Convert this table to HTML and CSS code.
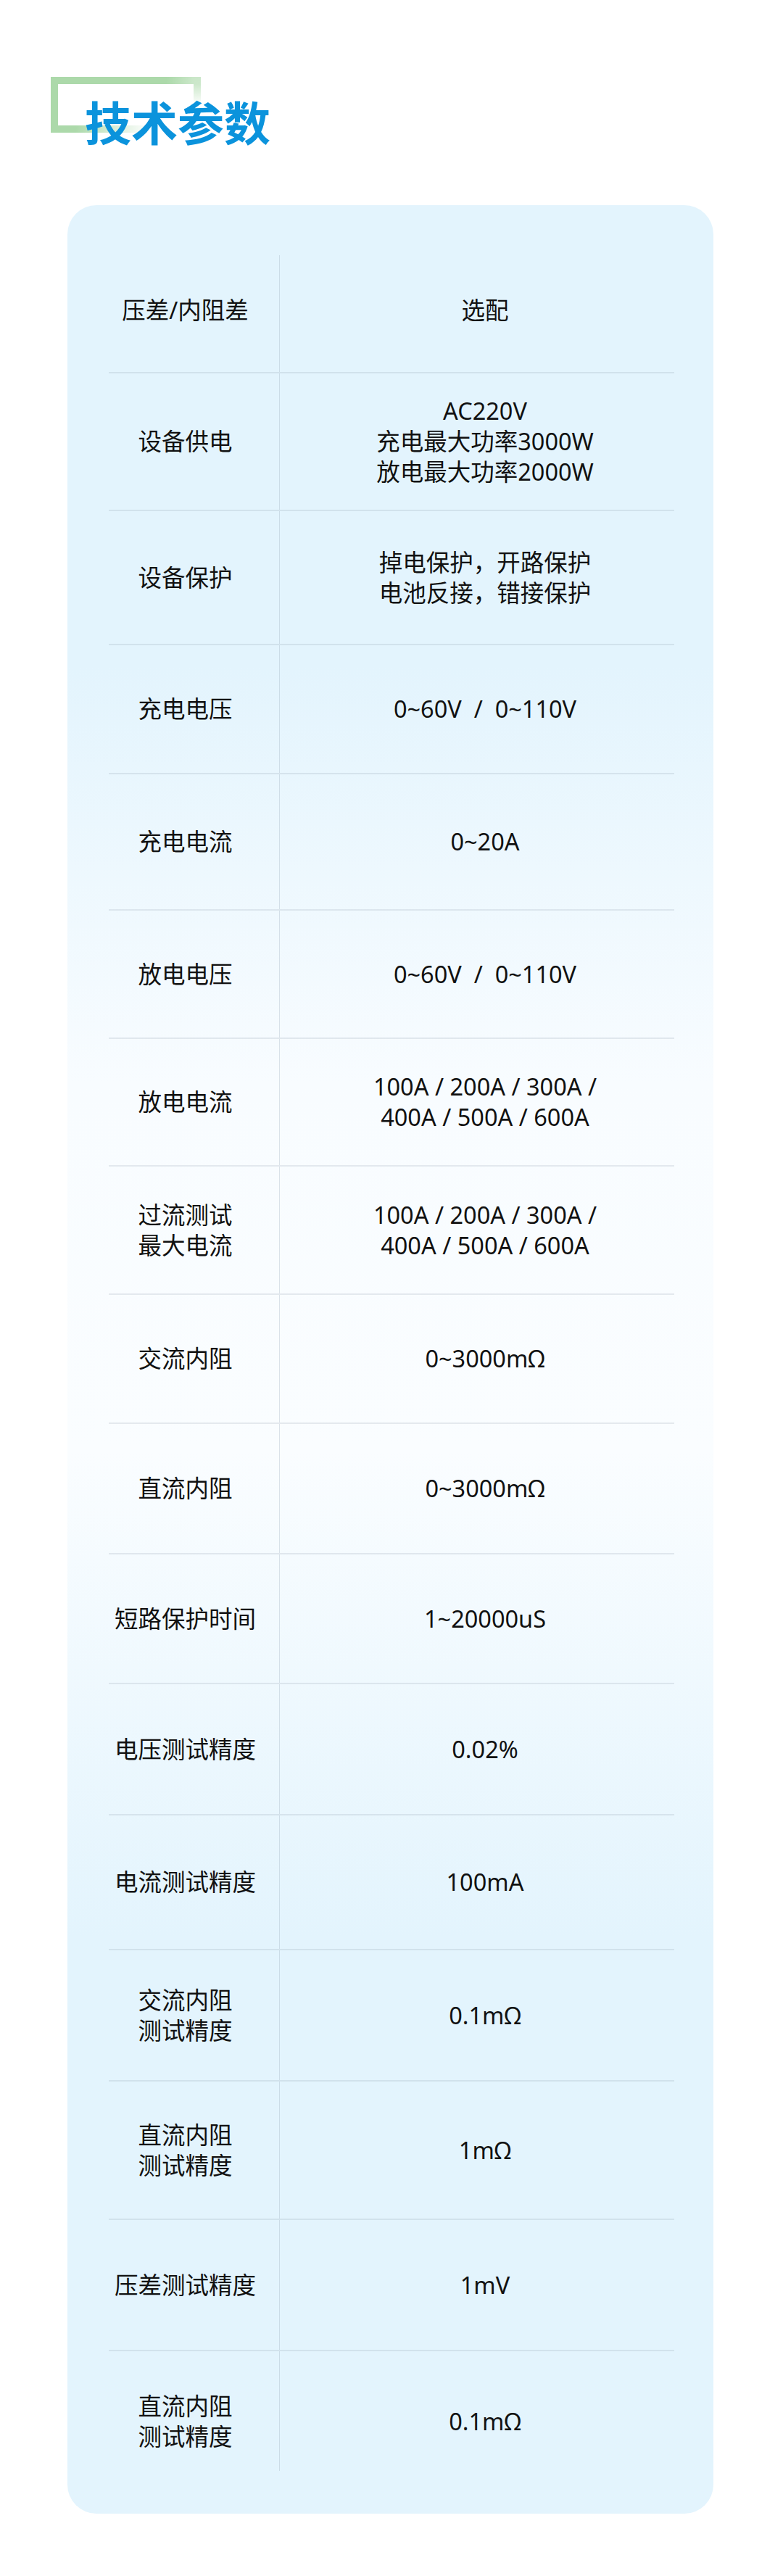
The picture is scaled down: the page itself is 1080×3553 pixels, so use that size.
FILE: index.html
```html
<!DOCTYPE html>
<html lang="zh-CN">
<head>
<meta charset="utf-8">
<title>技术参数</title>
<link rel="stylesheet" href="styles.css">
</head>
<body>
<div class="page">
  <header class="section-head">
    <h2 class="section-title">技术参数</h2>
  </header>
  <section class="card">
    <div class="spec">
      <div class="row first"><div class="label">压差/内阻差</div><div class="value">选配</div></div>
      <div class="row h190"><div class="label">设备供电</div><div class="value">AC220V<br>充电最大功率3000W<br>放电最大功率2000W</div></div>
      <div class="row h185"><div class="label">设备保护</div><div class="value">掉电保护，开路保护<br>电池反接，错接保护</div></div>
      <div class="row h178"><div class="label">充电电压</div><div class="value">0~60V&nbsp;&nbsp;/&nbsp;&nbsp;0~110V</div></div>
      <div class="row h188"><div class="label">充电电流</div><div class="value">0~20A</div></div>
      <div class="row h177"><div class="label">放电电压</div><div class="value">0~60V&nbsp;&nbsp;/&nbsp;&nbsp;0~110V</div></div>
      <div class="row h176"><div class="label">放电电流</div><div class="value">100A / 200A / 300A /<br>400A / 500A / 600A</div></div>
      <div class="row h177"><div class="label">过流测试<br>最大电流</div><div class="value">100A / 200A / 300A /<br>400A / 500A / 600A</div></div>
      <div class="row h178"><div class="label">交流内阻</div><div class="value">0~3000mΩ</div></div>
      <div class="row h180"><div class="label">直流内阻</div><div class="value">0~3000mΩ</div></div>
      <div class="row h179"><div class="label">短路保护时间</div><div class="value">1~20000uS</div></div>
      <div class="row h181"><div class="label">电压测试精度</div><div class="value">0.02%</div></div>
      <div class="row h186"><div class="label">电流测试精度</div><div class="value">100mA</div></div>
      <div class="row h181"><div class="label">交流内阻<br>测试精度</div><div class="value">0.1mΩ</div></div>
      <div class="row h191"><div class="label">直流内阻<br>测试精度</div><div class="value">1mΩ</div></div>
      <div class="row h181"><div class="label">压差测试精度</div><div class="value">1mV</div></div>
      <div class="row last"><div class="label">直流内阻<br>测试精度</div><div class="value">0.1mΩ</div></div>
    </div>
  </section>
</div>
</body>
</html>
```

FILE: styles.css
```css
html, body {
  margin: 0;
  padding: 0;
  background: #ffffff;
}

body {
  font-family: "Noto Sans", "Noto Sans CJK SC", sans-serif;
  color: #111111;
}

.page {
  width: 1080px;
  min-height: 3553px;
}

/* ---------- section heading ---------- */
.section-head {
  position: relative;
  height: 283px;
}

.section-head::before {
  content: "";
  position: absolute;
  left: 70px;
  top: 106px;
  width: 207px;
  height: 77px;
  box-sizing: border-box;
  border: 10px solid transparent;
  border-image: linear-gradient(151deg, #acd9aa 48%, rgba(172, 217, 170, 0) 80%) 1;
}

.section-title {
  position: relative;
  margin: 0;
  padding: 134px 0 0 117px;
  font-family: "Noto Sans CJK SC", sans-serif;
  font-size: 64px;
  line-height: 64px;
  font-weight: 700;
  color: #0b93dc;
  letter-spacing: 0;
}

/* ---------- card ---------- */
.card {
  box-sizing: border-box;
  width: 891px;
  margin-left: 93px;
  padding: 69px 54px 59px 57px;
  border-radius: 40px;
  background: linear-gradient(180deg,
    #e3f4fd 0%,
    #e3f4fd 20%,
    #f8fcff 38%,
    #fafdff 54%,
    #e3f4fd 75%,
    #e3f4fd 100%);
}

.spec {
  display: flex;
  flex-direction: column;
}

.row {
  box-sizing: border-box;
  display: grid;
  grid-template-columns: 235px 1fr;
  height: 180px;
  border-top: 2px solid rgba(140, 155, 172, 0.2);
}

.row.first {
  height: 161px;
  border-top: none;
}

.row.last {
  height: 167px;
}

.row.h176 { height: 176px; }
.row.h177 { height: 177px; }
.row.h178 { height: 178px; }
.row.h179 { height: 179px; }
.row.h180 { height: 180px; }
.row.h181 { height: 181px; }
.row.h185 { height: 185px; }
.row.h186 { height: 186px; }
.row.h188 { height: 188px; }
.row.h190 { height: 190px; }
.row.h191 { height: 191px; }

.label,
.value {
  display: flex;
  align-items: center;
  justify-content: center;
  text-align: center;
  font-size: 32.5px;
  line-height: 42px;
  font-weight: 400;
}

.label {
  padding-right: 24px;
}

.value {
  padding-left: 22px;
  border-left: 1px solid rgba(140, 158, 176, 0.28);
}

.row.first .label,
.row.first .value {
  padding-bottom: 10px;
}

.row.last .label,
.row.last .value {
  padding-top: 28px;
}
```
